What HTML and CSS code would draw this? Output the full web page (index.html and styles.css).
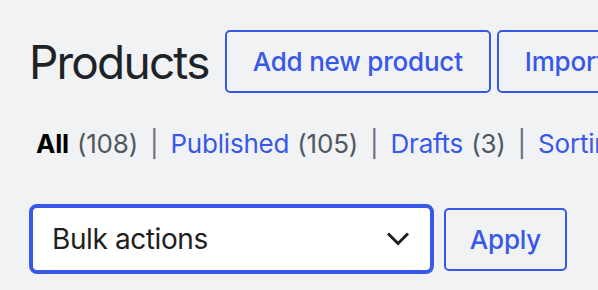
FILE: index.html
```html
<!DOCTYPE html>
<html lang="en">
<head>
<meta charset="utf-8">
<title>Products</title>
<link rel="stylesheet" href="styles.css">
</head>
<body>
<div class="page">
  <div class="head">
    <h1 class="title">Products</h1>
    <a class="btn" href="#">Add new product</a>
    <a class="btn" href="#">Import</a>
  </div>
  <ul class="filters">
    <li class="current">All <span class="count">(108)</span></li>
    <li class="sep">|</li>
    <li><a href="#">Published</a> <span class="count">(105)</span></li>
    <li class="sep">|</li>
    <li><a href="#">Drafts</a> <span class="count">(3)</span></li>
    <li class="sep">|</li>
    <li><a href="#">Sorting</a></li>
  </ul>
  <div class="actions">
    <div class="select">
      <span>Bulk actions</span>
      <svg class="chev" width="24" height="24" viewBox="0 0 24 24"><path d="M2 6.5 L12 16.5 L22 6.5" fill="none" stroke="#1e1e1e" stroke-width="3"/></svg>
    </div>
    <button class="btn apply" type="button">Apply</button>
  </div>
</div>
</body>
</html>
```

FILE: styles.css
```css
html, body {
  margin: 0;
  padding: 0;
  background: #f1f2f4;
  overflow: hidden;
}
body {
  font-family: Inter, "Noto Sans", sans-serif;
  color: #1e1e1e;
}
.page {
  padding: 30px 0 0 29px;
  white-space: nowrap;
}
.head {
  display: flex;
  align-items: center;
  gap: 6px;
}
.title {
  margin: 0 10px 0 0;
  font-size: 46px;
  font-weight: 400;
  letter-spacing: -1.8px;
  color: #1d2327;
}
.btn {
  display: inline-flex;
  align-items: center;
  box-sizing: border-box;
  height: 63px;
  padding: 0 26px;
  border: 2px solid #3858e9;
  border-radius: 5px;
  background: #f1f2f4;
  color: #3858e9;
  font-family: inherit;
  font-size: 26px;
  font-weight: 500;
  letter-spacing: -0.2px;
  text-decoration: none;
  flex: none;
}
.filters {
  list-style: none;
  margin: 31px 0 0 7px;
  padding: 0;
  display: flex;
  gap: 12px;
  font-size: 26px;
  line-height: 40px;
  letter-spacing: -0.2px;
}
.filters li { display: flex; gap: 8px; }
.filters .current { font-weight: 700; color: #000; }
.filters .current .count { font-weight: 400; }
.count { color: #50575e; }
.filters a { color: #3858e9; text-decoration: none; }
.sep { color: #6b6f75; }
.actions {
  display: flex;
  align-items: center;
  gap: 10px;
  margin-top: 40px;
}
.select {
  box-sizing: border-box;
  width: 405px;
  height: 70px;
  border: 4px solid #3858e9;
  border-radius: 8px;
  background: #fff;
  display: flex;
  align-items: center;
  justify-content: space-between;
  padding: 0 20px 0 19px;
  font-size: 28px;
  letter-spacing: -0.4px;
  color: #1e1e1e;
}
.chev { display: block; }
.apply {
  width: 123px;
  justify-content: center;
  padding: 0;
}
```
